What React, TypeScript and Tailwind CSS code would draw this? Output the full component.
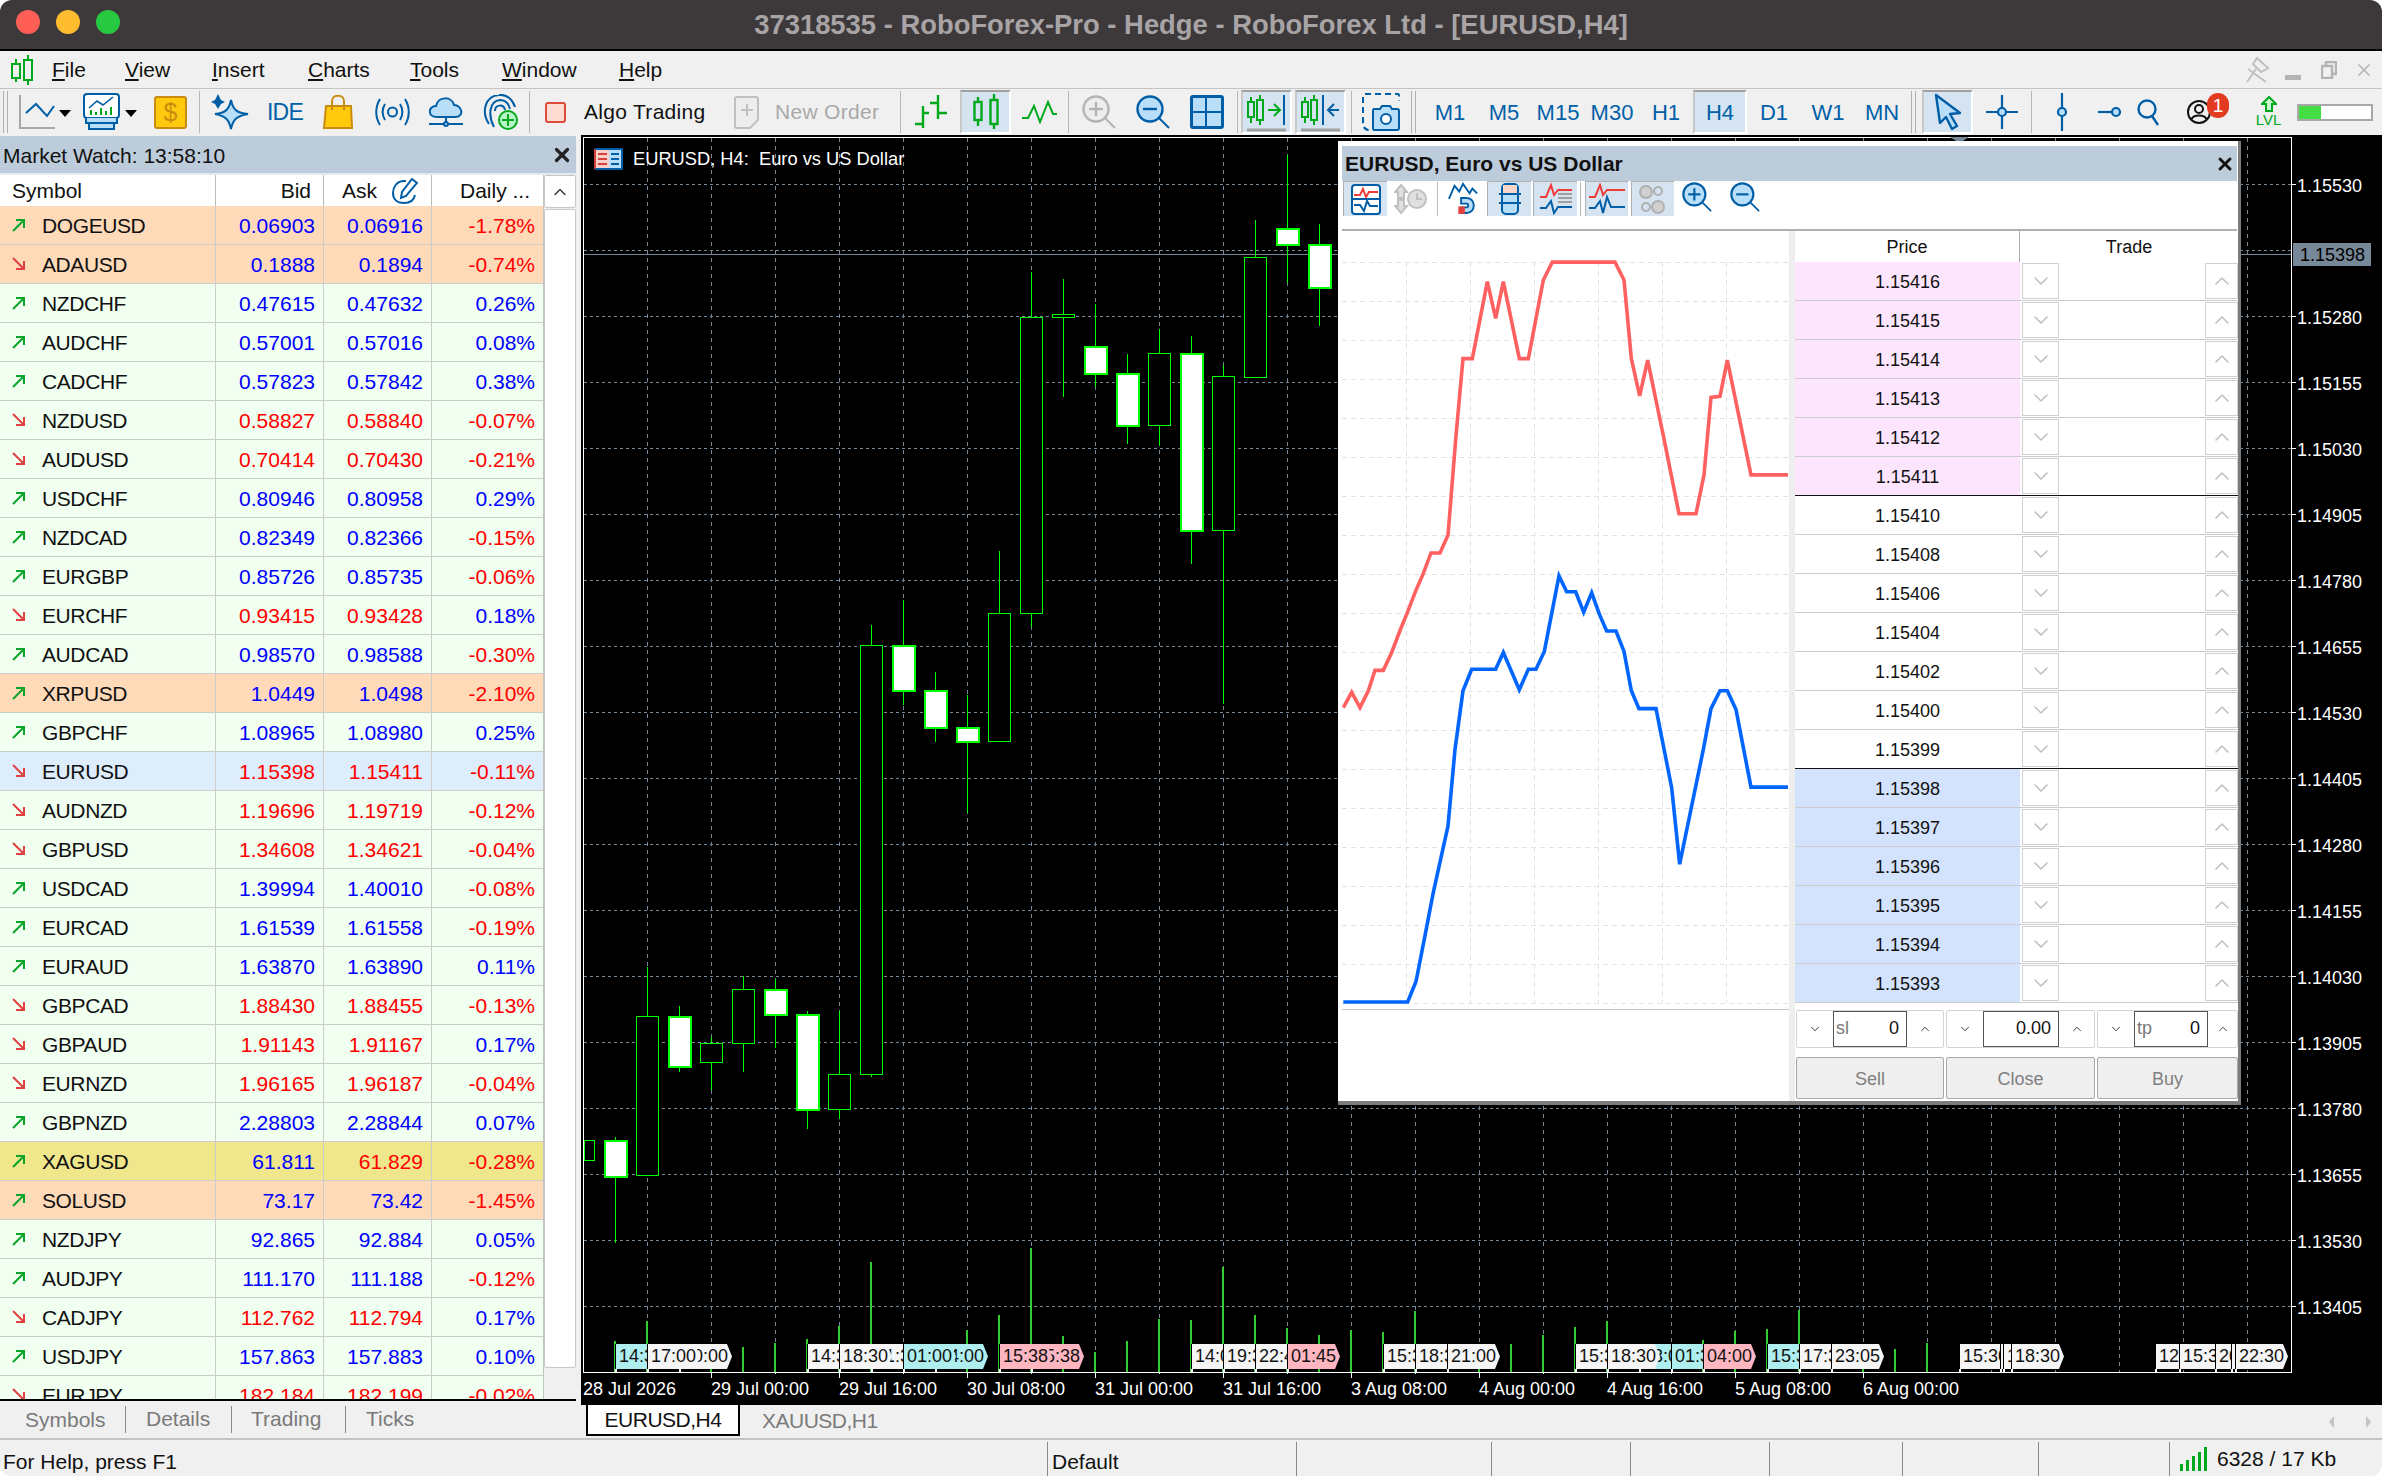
import { ChevronDown, ChevronUp, X } from 'lucide-react'

const BLUE = '#005ea6'
const LIGHT = '#b9def9'
const GREEN = '#00a81c'

type Row = [string, boolean, string, string, string, string?, string?]

const rows: Row[] = [
  ['DOGEUSD', true, '0.06903', '0.06916', '-1.78%', 'o'],
  ['ADAUSD', false, '0.1888', '0.1894', '-0.74%', 'o', 'b'],
  ['NZDCHF', true, '0.47615', '0.47632', '0.26%'],
  ['AUDCHF', true, '0.57001', '0.57016', '0.08%'],
  ['CADCHF', true, '0.57823', '0.57842', '0.38%'],
  ['NZDUSD', false, '0.58827', '0.58840', '-0.07%'],
  ['AUDUSD', false, '0.70414', '0.70430', '-0.21%'],
  ['USDCHF', true, '0.80946', '0.80958', '0.29%'],
  ['NZDCAD', true, '0.82349', '0.82366', '-0.15%'],
  ['EURGBP', true, '0.85726', '0.85735', '-0.06%'],
  ['EURCHF', false, '0.93415', '0.93428', '0.18%'],
  ['AUDCAD', true, '0.98570', '0.98588', '-0.30%'],
  ['XRPUSD', true, '1.0449', '1.0498', '-2.10%', 'o'],
  ['GBPCHF', true, '1.08965', '1.08980', '0.25%'],
  ['EURUSD', false, '1.15398', '1.15411', '-0.11%', 's'],
  ['AUDNZD', false, '1.19696', '1.19719', '-0.12%'],
  ['GBPUSD', false, '1.34608', '1.34621', '-0.04%'],
  ['USDCAD', true, '1.39994', '1.40010', '-0.08%'],
  ['EURCAD', true, '1.61539', '1.61558', '-0.19%'],
  ['EURAUD', true, '1.63870', '1.63890', '0.11%'],
  ['GBPCAD', false, '1.88430', '1.88455', '-0.13%'],
  ['GBPAUD', false, '1.91143', '1.91167', '0.17%'],
  ['EURNZD', false, '1.96165', '1.96187', '-0.04%'],
  ['GBPNZD', true, '2.28803', '2.28844', '0.07%'],
  ['XAGUSD', true, '61.811', '61.829', '-0.28%', 'k', 'm'],
  ['SOLUSD', true, '73.17', '73.42', '-1.45%', 'o'],
  ['NZDJPY', true, '92.865', '92.884', '0.05%'],
  ['AUDJPY', true, '111.170', '111.188', '-0.12%'],
  ['CADJPY', false, '112.762', '112.794', '0.17%'],
  ['USDJPY', true, '157.863', '157.883', '0.10%'],
  ['EURJPY', false, '182.184', '182.199', '-0.02%'],
]

const rowBg: Record<string, string> = {
  o: 'bg-[#ffdab9]',
  s: 'bg-[#deedfb]',
  k: 'bg-[#f0e68c]',
}

// x, high, body top, body bottom, low, filled
const candles: [number, number, number, number, number, boolean][] = [
  [583, 1140, 1140, 1160, 1160, false],
  [615, 1137, 1140, 1176, 1243, true],
  [647, 967, 1016, 1175, 1175, false],
  [679, 1006, 1016, 1066, 1072, true],
  [711, 1037, 1043, 1062, 1090, false],
  [743, 976, 989, 1043, 1072, false],
  [775, 979, 989, 1014, 1048, true],
  [807, 1011, 1014, 1109, 1129, true],
  [839, 1011, 1074, 1109, 1119, false],
  [871, 625, 645, 1074, 1077, false],
  [903, 600, 645, 690, 705, true],
  [935, 672, 690, 727, 742, true],
  [967, 695, 727, 741, 813, true],
  [999, 551, 613, 741, 741, false],
  [1031, 272, 317, 613, 627, false],
  [1063, 279, 314, 317, 397, false],
  [1095, 304, 346, 373, 387, true],
  [1127, 354, 373, 425, 444, true],
  [1159, 329, 353, 425, 446, false],
  [1191, 336, 353, 530, 564, true],
  [1223, 365, 376, 530, 704, false],
  [1255, 220, 257, 377, 377, false],
  [1287, 155, 228, 244, 283, true],
  [1319, 224, 244, 287, 326, true],
]

const volumes: [number, number][] = [
  [615, 1341], [647, 1321], [711, 1360], [743, 1347], [775, 1343], [807, 1339], [839, 1326], [871, 1262],
  [967, 1330], [999, 1315], [1031, 1248], [1063, 1336], [1095, 1352], [1127, 1341], [1159, 1319], [1191, 1320],
  [1223, 1267], [1255, 1315], [1287, 1328], [1319, 1335], [1351, 1330], [1383, 1332], [1415, 1311], [1479, 1360],
  [1511, 1344], [1543, 1335], [1575, 1327], [1607, 1321], [1703, 1340], [1735, 1331], [1767, 1329], [1799, 1310],
  [1863, 1360], [1895, 1349], [1927, 1343],
]

const prices = [
  '1.15530', '', '1.15280', '1.15155', '1.15030', '1.14905', '1.14780', '1.14655', '1.14530',
  '1.14405', '1.14280', '1.14155', '1.14030', '1.13905', '1.13780', '1.13655', '1.13530', '1.13405',
]

const times: [number, string][] = [
  [583, '28 Jul 2026'], [711, '29 Jul 00:00'], [839, '29 Jul 16:00'], [967, '30 Jul 08:00'],
  [1095, '31 Jul 00:00'], [1223, '31 Jul 16:00'], [1351, '3 Aug 08:00'], [1479, '4 Aug 00:00'],
  [1607, '4 Aug 16:00'], [1735, '5 Aug 08:00'], [1863, '6 Aug 00:00'],
]

const pillBg: Record<string, string> = {
  w: 'bg-[#f5f5f5]',
  b: 'bg-[#afeeee]',
  p: 'bg-[#ffb6c1]',
}

// drawn in this order, a later pill covers the one before it
const pills: [number, string, string][] = [
  [679, '20:00', 'w'], [615, '14:30', 'b'], [647, '17:00', 'w'],
  [871, '21:30', 'w'], [935, '04:00', 'b'], [903, '01:00', 'b'], [807, '14:30', 'w'], [839, '18:30', 'w'],
  [1031, '15:38', 'p'], [999, '15:38', 'p'],
  [1191, '14:00', 'w'], [1223, '19:30', 'w'], [1255, '22:45', 'w'], [1287, '01:45', 'p'],
  [1383, '15:30', 'w'], [1415, '18:30', 'w'], [1447, '21:00', 'w'],
  [1575, '15:30', 'w'], [1639, '23:00', 'b'], [1607, '18:30', 'w'], [1671, '01:30', 'b'], [1703, '04:00', 'p'],
  [1767, '15:30', 'b'], [1799, '17:30', 'w'], [1831, '23:05', 'w'],
  [1959, '15:30', 'w'], [2000, '17:00', 'w'], [2003, '17:30', 'w'], [2011, '18:30', 'w'],
  [2155, '12:00', 'w'], [2179, '15:30', 'w'], [2215, '20:00', 'w'], [2231, '21:00', 'w'], [2235, '22:30', 'w'],
]

const redLine = [
  [40, 938], [65, 908], [90, 938], [115, 905], [135, 865], [160, 865], [185, 830], [210, 787], [232, 752], [258, 708],
  [280, 675], [303, 635], [330, 635], [354, 600], [378, 405], [399, 254], [427, 254], [472, 103], [497, 175], [520, 103],
  [568, 254], [595, 254], [640, 100], [667, 65], [855, 65], [882, 100], [904, 254], [929, 327], [953, 257], [1000, 405],
  [1047, 558], [1098, 558], [1122, 482], [1143, 330], [1170, 328], [1192, 257], [1263, 482], [1374, 482],
]
const blueLine = [
  [40, 1515], [233, 1515], [258, 1475], [285, 1385], [310, 1300], [354, 1170], [375, 1020], [399, 905], [425, 863],
  [497, 863], [520, 830], [568, 903], [595, 863], [618, 863], [643, 828], [687, 680], [710, 711], [737, 711], [761, 751],
  [785, 713], [808, 755], [830, 788], [858, 788], [882, 828], [904, 905], [927, 940], [978, 940], [1025, 1095],
  [1049, 1245], [1120, 1020], [1143, 940], [1170, 905], [1192, 905], [1218, 942], [1263, 1094], [1374, 1094],
]
const toPoints = (pts: number[][]) => pts.map(([x, y]) => `${1330 + x / 3},${230 + y / 1.96}`).join(' ')

const book: [string, string][] = [
  ['1.15416', 'a'], ['1.15415', 'a'], ['1.15414', 'a'], ['1.15413', 'a'], ['1.15412', 'a'], ['1.15411', 'A'],
  ['1.15410', ''], ['1.15408', ''], ['1.15406', ''], ['1.15404', ''], ['1.15402', ''], ['1.15400', ''], ['1.15399', 'X'],
  ['1.15398', 'b'], ['1.15397', 'b'], ['1.15396', 'b'], ['1.15395', 'b'], ['1.15394', 'b'], ['1.15393', 'b'],
]

function Arrow({ up }: { up: boolean }) {
  return (
    <svg className="w-[14px] h-[14px] shrink-0" viewBox="0 0 14 14" fill="none" stroke={up ? '#0aa52a' : '#e04040'} strokeWidth="2">
      {up ? <path d="M1 13 L12 2 M4 2 H12 V10" /> : <path d="M1 1 L12 12 M4 12 H12 V4" />}
    </svg>
  )
}

function Sep({ className }: { className: string }) {
  return <div className={`w-px h-[42px] bg-[#b8b8b8] shrink-0 ${className}`} />
}

function Grip({ className }: { className: string }) {
  return <div className={`w-[5px] h-[42px] border-x border-[#b0b0b0] shrink-0 ${className}`} />
}

function Tri({ className }: { className: string }) {
  return (
    <svg className={`w-[12px] h-[7px] shrink-0 mt-[2px] ${className}`} viewBox="0 0 12 7">
      <path d="M0 0 H12 L6 7 Z" fill="#000" />
    </svg>
  )
}

function Pressed({ className, children }: { className?: string; children: React.ReactNode }) {
  return (
    <div className={`w-[51px] h-[44px] bg-[#d6e4f1] border-t-2 border-l-2 border-t-[#a0a0a0] border-l-[#c8c8c8] border-r-2 border-b-2 border-r-white border-b-white flex items-center justify-center shrink-0 ${className ?? ''}`}>
      {children}
    </div>
  )
}

function Magnifier({ kind, className }: { kind: 'plus' | 'minus'; className: string }) {
  const gray = className.includes('opacity')
  const c = gray ? '#b4b4b4' : BLUE
  return (
    <svg className={`w-[34px] h-[34px] shrink-0 ${className}`} viewBox="0 0 34 34" fill="none" stroke={c} strokeWidth="2.4">
      <circle cx="14" cy="14" r="12.5" fill={gray ? '#ededed' : LIGHT} />
      <path d="M7 14 H21" />
      {kind === 'plus' && <path d="M14 7 V21" />}
      <path d="M23 23 L33 33" strokeWidth="2" />
    </svg>
  )
}

function CandlePair() {
  return (
    <svg className="w-[26px] h-[36px]" viewBox="0 0 26 36" fill="none" stroke={GREEN} strokeWidth="2.4">
      <path d="M5 3 V32 M21 0 V35" />
      <rect x="1.5" y="8" width="7" height="18" fill="#d6e4f1" />
      <rect x="17.5" y="6" width="7" height="24" fill="#d6e4f1" />
    </svg>
  )
}

function MiniCandles() {
  return (
    <g fill="none" stroke={GREEN} strokeWidth="2">
      <path d="M4 5 V31 M13 3 V33" />
      <rect x="1" y="10" width="6" height="15" fill="#d6e4f1" />
      <rect x="10" y="8" width="6" height="20" fill="#d6e4f1" />
    </g>
  )
}

function WindowButtons() {
  return (
    <div className="flex items-center ml-auto mr-[8px] text-[#b4b4b4]">
      <svg className="w-[25px] h-[26px]" viewBox="0 0 25 26" fill="none" stroke="#c0c0c0" strokeWidth="2">
        <path d="M11 1 L22 11 L15 15 L7 7 Z M10 12 L1 25 M2 12 L20 25" />
      </svg>
      <div className="w-[16px] h-[5px] bg-[#b4b4b4] ml-[14px] mt-[14px]" />
      <svg className="w-[16px] h-[18px] ml-[20px]" viewBox="0 0 16 18" fill="none" stroke="#b4b4b4" strokeWidth="2.4">
        <rect x="1" y="5" width="10" height="12" />
        <path d="M5 5 V1 H15 V13 H11" />
      </svg>
      <X className="w-[20px] h-[20px] ml-[17px]" strokeWidth={2} absoluteStrokeWidth />
    </div>
  )
}

function Toolbar() {
  return (
    <div className="h-[47px] flex items-center bg-[#f0f0f0] border-t border-[#c4c4c4] text-[21px] shrink-0">
      <Grip className="ml-[3px]" />
      <svg className="w-[36px] h-[34px] ml-[11px] shrink-0" viewBox="0 0 36 34" fill="none">
        <path d="M1 0 V33 H36" stroke="#a8a8a8" strokeWidth="2" />
        <path d="M7 18 L17 9 L28 21 L35 11" stroke={BLUE} strokeWidth="2" />
      </svg>
      <Tri className="ml-[4px]" />
      <svg className="w-[37px] h-[38px] ml-[12px] shrink-0" viewBox="0 0 37 38" fill="none" stroke={BLUE} strokeWidth="2">
        <rect x="1" y="1" width="35" height="24" rx="3" fill="#fff" />
        <path d="M6 15 L14 8 L20 12 L30 4" strokeWidth="1.6" />
        <path d="M8 22 V17 M13 22 V19 M18 22 V15 M23 22 V18 M28 22 V14" stroke={GREEN} strokeWidth="2" />
        <path d="M3 25 V30 H34 V25 M6 30 V36 H31 V30" fill={LIGHT} />
      </svg>
      <Tri className="ml-[5px]" />
      <div className="w-[33px] h-[33px] ml-[17px] shrink-0 rounded-[3px] bg-[#ffc90e] border-2 border-[#c98c10] flex items-center justify-center text-[25px] leading-none text-[#c98c10]">$</div>
      <Sep className="ml-[12px]" />
      <svg className="w-[38px] h-[36px] ml-[11px] shrink-0" viewBox="0 0 38 36" fill={LIGHT} stroke={BLUE} strokeWidth="2">
        <path d="M20 6 C22 16 26 19 37 20 C26 22 22 25 20 35 C18 25 14 22 4 20 C14 19 18 16 20 6 Z" />
        <path d="M7 0 L10 6 L14 8 L10 10 L7 15 L4 10 L0 8 L4 6 Z" fill={BLUE} stroke="none" />
      </svg>
      <span className="w-[34px] ml-[18px] text-[#0060a8] text-[23px] tracking-[-0.8px] shrink-0 whitespace-nowrap">IDE</span>
      <svg className="w-[30px] h-[34px] ml-[22px] shrink-0" viewBox="0 0 30 34" fill="none" stroke="#c98c10" strokeWidth="2">
        <path d="M3 11 H28 L29 33 H1 Z" fill="#ffc90e" />
        <path d="M9 15 V6 C9 -1 21 -1 21 6 V15" />
      </svg>
      <svg className="w-[35px] h-[30px] ml-[22px] shrink-0" viewBox="0 0 35 30" fill="none" stroke={BLUE} strokeWidth="2">
        <circle cx="17.5" cy="15" r="4.5" />
        <path d="M10 7 C7 12 7 18 10 23 M25 7 C28 12 28 18 25 23 M5 2 C0 10 0 20 5 28 M30 2 C35 10 35 20 30 28" />
      </svg>
      <svg className="w-[34px] h-[30px] ml-[19px] shrink-0" viewBox="0 0 34 30" fill={LIGHT} stroke={BLUE} strokeWidth="2">
        <path d="M8 20 C-2 20 -1 9 7 9 C9 -1 23 -1 25 8 C33 8 36 20 26 20 Z" />
        <path d="M17 20 V26 M0 27 H34" fill="none" />
        <circle cx="17" cy="27" r="2" />
      </svg>
      <svg className="w-[35px] h-[36px] ml-[20px] shrink-0" viewBox="0 0 35 36" fill="none" stroke={BLUE} strokeWidth="2">
        <path d="M6 30 C-2 18 2 2 16 1 C24 0 30 6 32 13 M11 33 C5 22 6 7 17 6 C23 6 26 11 27 15 M12 17 C12 10 21 10 22 16" />
        <circle cx="25" cy="26" r="9" fill="#b8f5c8" stroke={GREEN} />
        <path d="M25 20 V32 M19 26 H31" stroke={GREEN} />
      </svg>
      <Sep className="ml-[11px]" />
      <div className="w-[21px] h-[21px] ml-[15px] shrink-0 rounded-[3px] bg-[#ffdcd2] border-2 border-[#e04a3c]" />
      <span className="ml-[18px] w-[123px] whitespace-nowrap shrink-0 tracking-[0.3px]">Algo Trading</span>
      <svg className="w-[25px] h-[33px] ml-[27px] shrink-0" viewBox="0 0 25 33" fill="#ededed" stroke="#c0c0c0" strokeWidth="2">
        <path d="M3 1 H22 C23 1 24 2 24 3 V24 L16 32 H3 C2 32 1 31 1 30 V3 C1 2 2 1 3 1 Z" />
        <path d="M13 8 V20 M7 14 H19" fill="none" />
      </svg>
      <span className="ml-[16px] w-[106px] whitespace-nowrap shrink-0 text-[#a9a9a9] tracking-[0.3px]">New Order</span>
      <Sep className="ml-[19px]" />
      <svg className="w-[34px] h-[34px] ml-[13px] shrink-0" viewBox="0 0 34 34" fill="none" stroke={GREEN} strokeWidth="2.4">
        <path d="M9 11 V33 M1 29 H9 M9 18 H15 M24 0 V24 M16 8 H24 M24 18 H33" />
      </svg>
      <Pressed className="ml-[12px]"><CandlePair /></Pressed>
      <svg className="w-[35px] h-[24px] ml-[11px] shrink-0" viewBox="0 0 35 24" fill="none" stroke={GREEN} strokeWidth="2">
        <path d="M0 18 H6 L12 6 L18 22 L26 2 L31 14 H35" />
      </svg>
      <Sep className="ml-[11px]" />
      <Magnifier kind="plus" className="ml-[13px] opacity-100" />
      <Magnifier kind="minus" className="ml-[20px]" />
      <div className="w-[34px] h-[34px] ml-[20px] shrink-0 rounded-[3px] border-[3px] border-[#005ea6] bg-[#b9def9] grid grid-cols-2">
        <div className="border-r-2 border-b-2 border-[#005ea6]" />
        <div className="border-b-2 border-[#005ea6]" />
        <div className="border-r-2 border-[#005ea6]" />
        <div />
      </div>
      <Sep className="ml-[13px]" />
      <Pressed className="ml-[3px]">
        <svg className="w-[40px] h-[40px]" viewBox="0 0 40 40" fill="none">
          <MiniCandles />
          <path d="M21 18 H32 M27 12 L33 18 L27 24" stroke={GREEN} strokeWidth="2" />
          <path d="M37 3 V33" stroke={BLUE} strokeWidth="2" />
          <path d="M0 38 H39" stroke="#a0a0a0" strokeWidth="3" />
        </svg>
      </Pressed>
      <Pressed className="ml-[3px]">
        <svg className="w-[40px] h-[40px]" viewBox="0 0 40 40" fill="none">
          <MiniCandles />
          <path d="M22 3 V33" stroke={BLUE} strokeWidth="2" />
          <path d="M38 18 H28 M33 12 L27 18 L33 24" stroke={BLUE} strokeWidth="2" />
          <path d="M0 38 H39" stroke="#a0a0a0" strokeWidth="3" />
        </svg>
      </Pressed>
      <Sep className="ml-[5px]" />
      <svg className="w-[38px] h-[38px] ml-[10px] shrink-0" viewBox="0 0 38 38" fill="none" stroke={BLUE} strokeWidth="2">
        <path d="M1 10 V3 C1 2 2 1 3 1 H36 C37 1 37 2 37 3 V8 M1 14 V28 C1 35 3 37 8 37" strokeDasharray="6 4" />
        <path d="M12 16 H18 L20 13 H28 L30 16 H35 C36 16 37 17 37 18 V35 C37 36 36 37 35 37 H12 C11 37 11 36 11 35 V18 C11 17 11 16 12 16 Z" fill={LIGHT} />
        <circle cx="24" cy="26" r="5" fill="#fff" />
      </svg>
      <Grip className="ml-[11px]" />
      <div className="ml-[7px] flex items-center shrink-0 text-[#0060a8] text-[22px]">
        {['M1', 'M5', 'M15', 'M30', 'H1'].map((t) => (
          <span key={t} className="w-[54px] text-center whitespace-nowrap">{t}</span>
        ))}
        <Pressed className="!w-[54px]"><span>H4</span></Pressed>
        {['D1', 'W1', 'MN'].map((t) => (
          <span key={t} className="w-[54px] text-center whitespace-nowrap">{t}</span>
        ))}
      </div>
      <Grip className="ml-[2px]" />
      <Pressed className="ml-[6px]">
        <svg className="w-[28px] h-[38px]" viewBox="0 0 28 38" fill={LIGHT} stroke={BLUE} strokeWidth="2.4" strokeLinejoin="round">
          <path d="M2 2 L26 20 L16 21 L23 33 L18 36 L12 24 L6 30 Z" />
        </svg>
      </Pressed>
      <svg className="w-[32px] h-[34px] ml-[13px] shrink-0" viewBox="0 0 32 34" fill="none" stroke={BLUE} strokeWidth="2.2">
        <path d="M16 0 V34 M0 17 H32" />
        <circle cx="16" cy="17" r="4" fill={LIGHT} />
      </svg>
      <Sep className="ml-[13px]" />
      <svg className="w-[32px] h-[38px] ml-[14px] shrink-0" viewBox="0 0 32 38" fill="none" stroke={BLUE} strokeWidth="2.2">
        <path d="M16 0 V38" />
        <circle cx="16" cy="19" r="4" fill={LIGHT} />
      </svg>
      <svg className="w-[26px] h-[12px] ml-[20px] shrink-0" viewBox="0 0 26 12" fill="none" stroke={BLUE} strokeWidth="2.2">
        <path d="M0 6 H18" />
        <circle cx="18" cy="6" r="4" fill={LIGHT} />
      </svg>
      <svg className="w-[22px] h-[28px] ml-[13px] shrink-0" viewBox="0 0 22 28" fill="none" stroke={BLUE} strokeWidth="2.4">
        <circle cx="10" cy="11" r="8.5" />
        <path d="M15 18 L21 27" />
      </svg>
      <div className="relative w-[24px] h-[26px] ml-[28px] shrink-0">
        <svg className="w-[24px] h-[26px]" viewBox="0 0 24 26" fill="none" stroke="#111" strokeWidth="2">
          <circle cx="12" cy="13" r="11" />
          <circle cx="12" cy="10" r="4" />
          <path d="M4 21 C6 15 18 15 20 21" />
        </svg>
        <div className="absolute -top-[6px] left-[20px] w-[22px] h-[25px] rounded-full bg-[#e23b20] text-white text-[19px] leading-[25px] text-center">1</div>
      </div>
      <div className="ml-[45px] w-[25px] flex flex-col items-center shrink-0">
        <svg className="w-[16px] h-[16px]" viewBox="0 0 16 16" fill="#c9f5cf" stroke={GREEN} strokeWidth="2">
          <path d="M8 1 L15 8 H11 V15 H5 V8 H1 Z" />
        </svg>
        <span className="text-[15px] leading-[16px] text-[#00a81c]">LVL</span>
      </div>
      <div className="ml-[16px] w-[76px] h-[17px] border-2 border-[#a8a8a8] bg-white shrink-0">
        <div className="w-[22px] h-full bg-[#44dd44]" />
      </div>
    </div>
  )
}

function MarketWatch() {
  return (
    <div className="w-[581px] flex flex-col bg-[#f0f0f0] shrink-0">
      <div className="h-[37px] mt-px w-[576px] bg-[#bdccda] flex items-center justify-between pl-[3px] pr-[3px] shrink-0">
        <span className="whitespace-nowrap pt-[2px]">Market Watch: 13:58:10</span>
        <X className="w-[22px] h-[22px] text-[#222]" strokeWidth={3.5} absoluteStrokeWidth />
      </div>
      <div className="h-[2px] w-[576px] bg-[#e4eaf0] shrink-0" />
      <div className="flex w-[576px] flex-1 min-h-0 border-b-2 border-black">
        <div className="w-[543px] flex flex-col min-h-0 bg-white">
          <div className="h-[31px] grid grid-cols-[216px_108px_108px_111px] shrink-0 items-center">
            <span className="pl-[12px] border-r border-[#bbbbbb] h-full leading-[32px]">Symbol</span>
            <span className="text-right pr-[12px] border-r border-[#bbbbbb] h-full leading-[32px]">Bid</span>
            <div className="flex items-center pl-[18px] gap-[15px] border-r border-[#bbbbbb] h-full">
              <span>Ask</span>
              <svg className="w-[26px] h-[26px]" viewBox="0 0 26 26" fill="none" stroke={BLUE} strokeWidth="2">
                <path d="M14 3 C4 2 1 10 1 15 C1 22 6 25 12 25 C18 25 22 22 23 17" />
                <path d="M20 1 L25 5 L14 18 L9 20 L10 14 Z" />
              </svg>
            </div>
            <span className="text-right pr-[13px] whitespace-nowrap">Daily ...</span>
          </div>
          <div className="overflow-hidden flex-1 min-h-0">
            {rows.map(([name, up, bid, ask, daily, bg, mode]) => {
              const bidColor = up || mode === 'b' ? 'text-[#0000ff]' : 'text-[#ff0000]'
              const askColor = mode === 'm' || !(up || mode === 'b') ? 'text-[#ff0000]' : 'text-[#0000ff]'
              return (
                <div key={name} className={`h-[39px] grid grid-cols-[216px_108px_108px_111px] border-b border-[#cccccc] ${bg ? rowBg[bg] : 'bg-[#f0fff0]'}`}>
                  <div className="flex items-center gap-[16px] pl-[12px] border-r border-[#cccccc]">
                    <Arrow up={up} />
                    <span className="pt-[2px] tracking-[-0.4px]">{name}</span>
                  </div>
                  <span className={`text-right pr-[8px] pt-[2px] leading-[36px] border-r border-[#cccccc] ${bidColor}`}>{bid}</span>
                  <span className={`text-right pr-[8px] pt-[2px] leading-[36px] border-r border-[#cccccc] ${askColor}`}>{ask}</span>
                  <span className={`text-right pr-[8px] pt-[2px] leading-[36px] ${daily.startsWith('-') ? 'text-[#ff0000]' : 'text-[#0000ff]'}`}>{daily}</span>
                </div>
              )
            })}
          </div>
        </div>
        <div className="w-[33px] flex flex-col shrink-0 border-l border-[#c4c4c4]">
          <div className="h-[33px] bg-white border border-[#c8c8c8] rounded-[2px] flex items-center justify-center shrink-0">
            <ChevronUp className="w-[20px] h-[20px] text-[#333]" strokeWidth={1.6} />
          </div>
          <div className="h-[1159px] bg-white border border-[#c8c8c8] rounded-[2px] mt-px shrink-0" />
        </div>
      </div>
      <div className="h-[37px] w-[576px] flex items-center text-[#7a7a7a] shrink-0">
        <span className="w-[125px] pl-[25px]">Symbols</span>
        <span className="w-[106px] pl-[20px] border-l border-[#8a8a8a] h-[27px] leading-[25px]">Details</span>
        <span className="w-[114px] pl-[19px] border-l border-[#8a8a8a] h-[27px] leading-[25px]">Trading</span>
        <span className="pl-[20px] border-l border-[#8a8a8a] h-[27px] leading-[25px]">Ticks</span>
      </div>
    </div>
  )
}

function ChartCanvas() {
  return (
    <svg className="absolute inset-0 w-[1801px] h-[1270px]" viewBox="581 135 1801 1270" fontSize="18">
      {Array.from({ length: 18 }, (_, i) => (
        <path key={i} d={`M584 ${184.5 + 66 * i} H2291`} stroke="#778899" strokeDasharray="3 3" shapeRendering="crispEdges" />
      ))}
      {Array.from({ length: 26 }, (_, i) => (
        <path key={i} d={`M${647.5 + 64 * i} 138 V1372`} stroke="#778899" strokeDasharray="4 4" shapeRendering="crispEdges" />
      ))}
      <path d="M584 254.5 H2291" stroke="#778899" shapeRendering="crispEdges" />
      {volumes.map(([x, top]) => (
        <rect key={x} x={x - 1} y={top} width="2" height={1372 - top} fill="#32cd32" />
      ))}
      {candles.map(([x, high, top, bottom, low, filled]) => (
        <g key={x} shapeRendering="crispEdges" stroke="#00ff00">
          <path d={`M${x + 0.5} ${high} V${low}`} />
          <rect
            x={Math.max(x - 10.5, 584.5)}
            y={top + 0.5}
            width={x === 583 ? 10 : 22}
            height={bottom - top}
            fill={filled ? '#fff' : '#000'}
            strokeWidth={filled ? 2 : 1}
          />
        </g>
      ))}
      <path d="M583.5 137.5 H2291.5 V1372.5 H583.5 Z" fill="none" stroke="#fff" shapeRendering="crispEdges" />
      <path d="M1950 137 H1969 L1959.5 143 Z" fill="#778899" />
      {prices.map((p, i) =>
        p ? (
          <g key={p}>
            <path d={`M2291 ${184.5 + 66 * i} H2296`} stroke="#fff" shapeRendering="crispEdges" />
            <text x="2297" y={191.5 + 66 * i} fill="#fff">{p}</text>
          </g>
        ) : null,
      )}
      <rect x="2293" y="243" width="78" height="23" fill="#778899" />
      <text x="2300" y="261" fill="#000">1.15398</text>
      {Array.from({ length: 19 }, (_, i) => (
        <path key={i} d={`M${711.5 + 64 * i} 1372 V${i % 2 ? 1374 : 1378}`} stroke="#fff" shapeRendering="crispEdges" />
      ))}
      {pills.map(([x]) => (
        <rect key={x} x={x} y="1369" width="2" height="4" fill="#fff" />
      ))}
      {times.map(([x, t]) => (
        <text key={t} x={x} y="1395" fill="#fff">{t}</text>
      ))}
    </svg>
  )
}

function BookRow({ price, kind }: { price: string; kind: string }) {
  const bg = kind === 'a' || kind === 'A' ? 'bg-[#fde6fd]' : kind === 'b' ? 'bg-[#d4e3fd]' : 'bg-white'
  const line = kind === 'A' || kind === 'X' ? 'border-[#111111]' : 'border-[#cccccc]'
  return (
    <div className={`h-[39px] flex border-b ${line}`}>
      <div className={`w-[225px] text-center pt-[2px] leading-[36px] ${bg}`}>{price}</div>
      <div className="w-[37px] h-[36px] ml-[2px] mt-px border border-[#d0d0d0] flex items-center justify-center">
        <ChevronDown className="w-[24px] h-[24px] text-[#c0c0c0]" strokeWidth={1.6} />
      </div>
      <div className="w-[33px] h-[36px] ml-auto mt-px border border-[#d0d0d0] flex items-center justify-center">
        <ChevronUp className="w-[24px] h-[24px] text-[#c0c0c0]" strokeWidth={1.6} />
      </div>
    </div>
  )
}

function Spinner({ label, value, width, inputWidth }: { label?: string; value: string; width: string; inputWidth: string }) {
  return (
    <div className={`h-[38px] flex border border-[#d4d4d4] rounded-[2px] ${width}`}>
      <div className="w-[36px] flex items-center justify-center">
        <ChevronDown className="w-[14px] h-[14px] text-[#333]" strokeWidth={1.6} />
      </div>
      <div className={`border border-[#555555] flex justify-between pl-[2px] pr-[7px] leading-[33px] ${inputWidth}`}>
        <span className="text-[#777777]">{label}</span>
        <span>{value}</span>
      </div>
      <div className="flex-1 flex items-center justify-center">
        <ChevronUp className="w-[14px] h-[14px] text-[#333]" strokeWidth={1.6} />
      </div>
    </div>
  )
}

function DepthDialog() {
  return (
    <div className="absolute left-[757px] top-[6px] w-[903px] h-[964px] bg-white border-r-[3px] border-b-4 border-r-[#7c7c7c] border-b-[#7c7c7c] pl-[4px] pt-[5px] flex flex-col">
      <div className="h-[35px] w-[895px] bg-[#bdccda] flex items-center justify-between pl-[3px] pr-[2px] shrink-0">
        <span className="font-bold text-[21px] pt-px">EURUSD, Euro vs US Dollar</span>
        <X className="w-[20px] h-[20px] text-[#111]" strokeWidth={3.5} absoluteStrokeWidth />
      </div>
      <div className="h-[36px] flex shrink-0 items-start">
        <div className="w-[44px] h-[35px] ml-px bg-[#d6e4f1] border-t border-l border-[#b0b0b0] flex items-center justify-center shrink-0">
          <svg className="w-[30px] h-[31px]" viewBox="0 0 30 31" fill="#fff" stroke={BLUE} strokeWidth="2">
            <rect x="1" y="1" width="28" height="29" rx="3" />
            <path d="M1 15 H29" />
            <path d="M3 11 H9 L12 5 L15 13 L18 8 H27" stroke="#ef3a3a" fill="none" />
            <path d="M3 21 H9 L13 27 L16 17 L19 22 H27" fill="none" />
          </svg>
        </div>
        <svg className="w-[34px] h-[32px] ml-[7px] mt-[2px] shrink-0" viewBox="0 0 34 32" fill="#e0e0e0" stroke="#c0c0c0" strokeWidth="2">
          <circle cx="23" cy="16" r="9" />
          <path d="M23 10 V16 H28" fill="none" />
          <path d="M7 2 L13 9 H10 V15 H4 V9 H1 Z M7 30 L13 23 H10 V17 H4 V23 H1 Z" />
        </svg>
        <div className="w-px h-[34px] bg-[#bbbbbb] ml-[9px] mt-[1px] shrink-0" />
        <svg className="w-[30px] h-[34px] ml-[10px] shrink-0" viewBox="0 0 32 34" fill="none" stroke={BLUE} strokeWidth="2">
          <path d="M1 18 L7 4 L12 10 L16 2 L23 12 L26 7 L31 12" />
          <path d="M14 17 H20 C30 17 30 33 20 33 H14 V27 H20 C22 27 22 23 20 23 H14 Z" fill={LIGHT} />
          <rect x="12" y="27" width="5" height="6" fill="#e04040" stroke="#e04040" />
        </svg>
        <div className="w-[44px] h-[35px] ml-[9px] bg-[#d6e4f1] border-t border-l border-[#b0b0b0] flex items-center justify-center shrink-0">
          <svg className="w-[22px] h-[32px]" viewBox="0 0 22 32" fill="none" stroke={BLUE} strokeWidth="2">
            <rect x="3" y="1" width="16" height="30" rx="4" fill={LIGHT} />
            <path d="M4 2 H18 V11 H4 Z" fill="#fbd6c8" stroke="none" />
            <path d="M0 11 H22 M0 20 H22" />
          </svg>
        </div>
        <div className="w-[44px] h-[35px] ml-[2px] bg-[#d6e4f1] border-t border-l border-[#b0b0b0] flex items-center justify-center shrink-0">
          <svg className="w-[32px] h-[32px]" viewBox="0 0 32 32" fill="none" strokeWidth="2">
            <path d="M0 14 H6 L11 2 L14 12 L18 7 H32" stroke="#ef3a3a" />
            <path d="M18 11 H32 M18 15 H32 M18 19 H32" stroke="#a0a0a0" />
            <path d="M0 25 H6 L11 18 L14 30 L18 24 H32" stroke={BLUE} />
          </svg>
        </div>
        <div className="w-px h-[34px] bg-[#bbbbbb] ml-[3px] mt-[1px] shrink-0" />
        <div className="w-[43px] h-[35px] ml-[4px] bg-[#d6e4f1] border-t border-l border-[#b0b0b0] flex items-center justify-center shrink-0">
          <svg className="w-[36px] h-[32px]" viewBox="0 0 36 32" fill="none" strokeWidth="2">
            <path d="M0 14 H6 L11 2 L14 12 L18 7 H36" stroke="#ef3a3a" />
            <path d="M0 25 H6 L11 18 L14 30 L18 14 L22 24 H36" stroke={BLUE} />
          </svg>
        </div>
        <div className="w-[43px] h-[35px] ml-[3px] bg-[#d6e4f1] border-t border-l border-[#b0b0b0] flex items-center justify-center shrink-0">
          <svg className="w-[30px] h-[32px]" viewBox="0 0 30 32" fill="#d0d0d0" stroke="#b0b0b0" strokeWidth="2">
            <circle cx="8" cy="9" r="6" />
            <circle cx="20" cy="8" r="4" fill="none" />
            <circle cx="8" cy="24" r="4" fill="none" />
            <circle cx="20" cy="24" r="6" />
          </svg>
        </div>
        <Magnifier kind="plus" className="ml-[8px] !w-[30px] !h-[32px]" />
        <Magnifier kind="minus" className="ml-[18px] !w-[30px] !h-[32px]" />
      </div>
      <div className="h-[14px] w-[895px] border-b-2 border-[#b0b0b0] shrink-0" />
      <div className="flex flex-1 min-h-0 w-[896px]">
        <svg className="w-[447px] h-[869px] shrink-0" viewBox="1342 232 447 869">
          {Array.from({ length: 20 }, (_, i) => (
            <path key={i} d={`M1342 ${263.5 + 39 * i} H1789`} stroke="#e2e2e2" strokeDasharray="5 4" shapeRendering="crispEdges" />
          ))}
          {[1406, 1470, 1534, 1598, 1662, 1726].map((x) => (
            <path key={x} d={`M${x + 0.5} 263 V1004`} stroke="#e2e2e2" strokeDasharray="5 4" shapeRendering="crispEdges" />
          ))}
          <path d="M1342 1010.5 H1789" stroke="#c4c4c4" shapeRendering="crispEdges" />
          <polyline points={toPoints(redLine)} fill="none" stroke="#ff6060" strokeWidth="3.6" />
          <polyline points={toPoints(blueLine)} fill="none" stroke="#0066ff" strokeWidth="3.6" />
        </svg>
        <div className="w-[6px] bg-[#eeeeee] shrink-0" />
        <div className="flex-1 min-w-0 flex flex-col">
          <div className="h-[31px] flex shrink-0">
            <div className="w-[225px] text-center pt-[2px] leading-[29px] border-r border-[#aaaaaa]">Price</div>
            <div className="flex-1 text-center pt-[2px] leading-[29px]">Trade</div>
          </div>
          {book.map(([price, kind]) => (
            <BookRow key={price} price={price} kind={kind} />
          ))}
          <div className="flex gap-[2px] mt-[7px] pl-px">
            <Spinner label="sl" value="0" width="w-[148px]" inputWidth="w-[74px]" />
            <Spinner value="0.00" width="w-[149px]" inputWidth="w-[76px]" />
            <Spinner label="tp" value="0" width="w-[141px]" inputWidth="w-[74px]" />
          </div>
          <div className="flex gap-[2px] mt-[9px] pl-px text-[#808080]">
            <div className="w-[148px] h-[42px] bg-[#efefef] border border-[#a8a8a8] rounded-[2px] text-center pt-[3px] leading-[37px]">Sell</div>
            <div className="w-[149px] h-[42px] bg-[#efefef] border border-[#a8a8a8] rounded-[2px] text-center pt-[3px] leading-[37px]">Close</div>
            <div className="w-[141px] h-[42px] bg-[#efefef] border border-[#a8a8a8] rounded-[2px] text-center pt-[3px] leading-[37px]">Buy</div>
          </div>
        </div>
      </div>
    </div>
  )
}

function ChartArea() {
  return (
    <div className="flex-1 min-w-0 flex flex-col">
      <div className="relative h-[1270px] bg-black text-[18px] shrink-0">
        <ChartCanvas />
        <div className="absolute left-[13px] top-[10px] flex items-center gap-[10px] text-white text-[18.3px] whitespace-pre">
          <div className="w-[29px] h-[22px] flex border-2 border-[#005ea6] rounded-[2px] border-l-[#d8403a]">
            <div className="flex-1 bg-[#fbd0c8] flex flex-col justify-evenly px-[2px]">
              <div className="h-[2px] bg-[#d8403a]" />
              <div className="h-[2px] bg-[#d8403a]" />
              <div className="h-[2px] bg-[#d8403a]" />
            </div>
            <div className="flex-1 bg-[#b9def9] flex flex-col justify-evenly px-[2px]">
              <div className="h-[2px] bg-[#005ea6]" />
              <div className="h-[2px] bg-[#005ea6]" />
              <div className="h-[2px] bg-[#005ea6]" />
            </div>
          </div>
          <span>EURUSD, H4:  Euro vs US Dollar</span>
        </div>
        {pills.map(([x, t, c]) => (
          <div
            key={x}
            style={{ left: x - 581 }}
            className={`absolute top-[1209px] h-[25px] w-[53px] pl-[3px] text-[#111] leading-[25px] overflow-hidden whitespace-nowrap [clip-path:polygon(0_0,calc(100%-5px)_0,100%_50%,calc(100%-5px)_100%,0_100%)] border-l border-black ${pillBg[c]}`}
          >
            {t}
          </div>
        ))}
        <DepthDialog />
      </div>
      <div className="flex-1 flex items-start relative">
        <div className="ml-[5px] w-[154px] h-[31px] bg-white border-x-2 border-b-2 border-black text-center leading-[29px] tracking-[-0.5px]">EURUSD,H4</div>
        <span className="ml-[22px] text-[#7a7a7a] leading-[31px] tracking-[-0.5px]">XAUUSD,H1</span>
        <svg className="absolute right-[11px] top-[11px] w-[42px] h-[12px]" viewBox="0 0 42 12" fill="#c4c4c4">
          <path d="M5 0 V12 L0 6 Z M37 0 V12 L42 6 Z" />
        </svg>
      </div>
    </div>
  )
}

function StatusBar() {
  const cells = ['w-[249px]', 'w-[195px]', 'w-[139px]', 'w-[139px]', 'w-[133px]', 'w-[136px]', 'w-[131px]']
  return (
    <div className="h-[38px] flex items-end bg-[#f0f0f0] border-t-2 border-[#c4c4c4] shrink-0">
      <span className="w-[1047px] pl-[3px] h-[34px] leading-[40px] shrink-0">For Help, press F1</span>
      {cells.map((w, i) => (
        <span key={w + i} className={`${w} h-[34px] pl-[4px] border-l border-[#888888] leading-[40px] shrink-0`}>
          {i === 0 ? 'Default' : ''}
        </span>
      ))}
      <div className="h-[34px] flex items-center border-l border-[#888888] pl-[10px] gap-[9px] whitespace-nowrap">
        <svg className="w-[28px] h-[24px]" viewBox="0 0 28 24" fill={GREEN}>
          <path d="M0 17 h3 v7 h-3 Z M6 13 h3 v11 h-3 Z M12 9 h3 v15 h-3 Z M18 5 h3 v19 h-3 Z M24 0 h3 v24 h-3 Z" />
        </svg>
        <span>6328 / 17 Kb</span>
      </div>
    </div>
  )
}

export default function App() {
  return (
    <div className="w-[2382px] h-[1476px] flex flex-col overflow-hidden rounded-[12px] bg-[#f0f0f0] text-[21px] text-[#111] font-['Liberation_Sans',sans-serif]">
      <div className="relative h-[51px] bg-[#3d393b] border-b-2 border-black flex items-center justify-center shrink-0">
        <div className="absolute left-[16px] top-[10px] flex gap-[16px]">
          <div className="w-[24px] h-[24px] rounded-full bg-[#ff5f57]" />
          <div className="w-[24px] h-[24px] rounded-full bg-[#febc2e]" />
          <div className="w-[24px] h-[24px] rounded-full bg-[#28c840]" />
        </div>
        <span className="font-bold text-[27.4px] text-[#a8a4a6] whitespace-nowrap">37318535 - RoboForex-Pro - Hedge - RoboForex Ltd - [EURUSD,H4]</span>
      </div>
      <div className="h-[37px] flex items-center shrink-0 bg-[#f0f0f0] pt-px">
        <svg className="w-[22px] h-[30px] ml-[11px] shrink-0" viewBox="0 0 22 30" fill="none" stroke={GREEN} strokeWidth="2">
          <path d="M5 4 V27 M17 0 V30" />
          <rect x="1" y="9" width="8" height="14" fill="#f0f0f0" />
          <rect x="13" y="5" width="8" height="20" fill="#f0f0f0" />
        </svg>
        <span className="ml-[19px] w-[73px]"><u>F</u>ile</span>
        <span className="w-[87px]"><u>V</u>iew</span>
        <span className="w-[96px]"><u>I</u>nsert</span>
        <span className="w-[102px]"><u>C</u>harts</span>
        <span className="w-[92px]"><u>T</u>ools</span>
        <span className="w-[117px]"><u>W</u>indow</span>
        <span><u>H</u>elp</span>
        <WindowButtons />
      </div>
      <Toolbar />
      <div className="flex flex-1 min-h-0">
        <MarketWatch />
        <ChartArea />
      </div>
      <StatusBar />
    </div>
  )
}
